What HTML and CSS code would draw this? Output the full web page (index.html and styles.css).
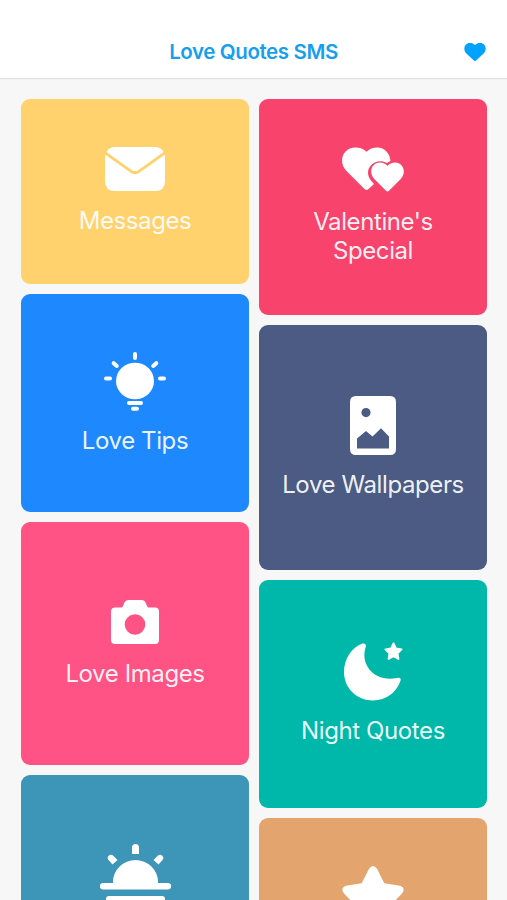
FILE: index.html
```html
<!DOCTYPE html>
<html lang="en">
<head>
    <meta charset="UTF-8">
    <meta name="viewport" content="width=device-width, initial-scale=1.0">
    <title>Love Quotes SMS</title>
    <link rel="stylesheet" href="styles.css">
</head>
<body>
    <header class="header">
        <h1>Love Quotes SMS</h1>
        <svg class="favorite" width="22" height="20" viewBox="0 0 22 20"><path d="M11 19Q10.3 19 9.6 18.3L2.4 11.6C-1.6 7.4.6.9 5.8.9 8 .9 9.8 1.5 11 3 12.2 1.5 14 .9 16.2.9 21.4.9 23.6 7.4 19.6 11.6L12.4 18.3Q11.7 19 11 19Z"/></svg>
    </header>
    <main class="grid">
        <div class="column">
            <a class="card messages">
                <svg width="60" height="44" viewBox="0 0 60 44">
                    <path d="M1.5 5Q4 0 10 0H50Q56 0 58.5 5L33.5 23Q30 25.5 26.5 23Z"/>
                    <path d="M0 7.5L26 26Q30 28.5 34 26L60 7.5V34Q60 44 50 44H10Q0 44 0 34Z"/>
                </svg>
                <span>Messages</span>
            </a>
            <a class="card tips">
                <svg width="62" height="60" viewBox="0 0 62 60">
                    <ellipse cx="31" cy="30" rx="19" ry="18.3"/>
                    <path class="line" d="M31 3V7M9.7 12.2L12.8 15M52.3 12.2L49.2 15M2 27.5H6M56 27.5H60M25 52H37M29 57.8H33"/>
                </svg>
                <span>Love Tips</span>
            </a>
            <a class="card images">
                <svg width="48" height="44" viewBox="0 0 48 44">
                    <path fill-rule="evenodd" d="M4 7.5H10Q11.5 7.5 12 6L13.2 3Q14.5 0 17.5 0H30.5Q33.5 0 34.8 3L36 6Q36.5 7.5 38 7.5H44Q48 7.5 48 11.5V40Q48 44 44 44H4Q0 44 0 40V11.5Q0 7.5 4 7.5ZM24 14.2A10.3 10.3 0 1 0 24 34.8A10.3 10.3 0 1 0 24 14.2Z"/>
                </svg>
                <span>Love Images</span>
            </a>
            <a class="card morning">
                <svg width="71" height="60" viewBox="0 0 71 60">
                    <path d="M13 39V38A22.5 22 0 0 1 58 38V39H68A3.2 3.2 0 0 1 68 45.5H3A3.2 3.2 0 0 1 3 39ZM9 52H62A3 3 0 0 1 62 58H9A3 3 0 0 1 9 52Z"/>
                    <path d="M32 10V3.5A3.5 3.5 0 0 1 39 3.5V10ZM12.5 20.5L8.5 16A3.2 3.2 0 0 1 13 11.5L17.5 16ZM58.5 20.5L62.5 16A3.2 3.2 0 0 0 58 11.5L53.5 16Z"/>
                </svg>
            </a>
        </div>
        <div class="column">
            <a class="card valentine">
                <svg width="62" height="45" viewBox="0 0 62 45">
                    <path d="M24.5 43Q23.5 43 22.5 42L4.5 24C-4.5 14.5 1 .5 13.5.5 18 .5 22 2 24.5 4.8 27 2 31 .5 35.5.5 42.5.5 48 6.5 48.5 14Q46.5 14.8 45 16C32.5 9.5 20.5 22.5 28.7 33.3L32 37 26.5 42Q25.5 43 24.5 43Z"/>
                    <path d="M45.5 44.5Q44.8 44.5 44 43.7L32.3 32C26 25 30 15.5 38 15.5 41 15.5 43.8 16.7 45.5 19 47.2 16.7 50 15.5 53 15.5 61 15.5 65 25 58.7 32L47 43.7Q46.2 44.5 45.5 44.5Z"/>
                </svg>
                <span>Valentine's Special</span>
            </a>
            <a class="card wallpapers">
                <svg width="46" height="59" viewBox="0 0 46 59">
                    <path fill-rule="evenodd" d="M6 0H40Q46 0 46 6V53Q46 59 40 59H6Q0 59 0 53V6Q0 0 6 0ZM16 12A4.6 4.6 0 1 0 16 21.2A4.6 4.6 0 1 0 16 12ZM7 52.5H39V40.5L31 32.2 22.5 40.5 16 35 7 42.5Z"/>
                </svg>
                <span>Love Wallpapers</span>
            </a>
            <a class="card night">
                <svg width="60" height="59" viewBox="0 0 60 59">
                    <path d="M19.5 1.6C21.5.8 23.5 2.4 22.8 4.7C16.5 23 32 40.5 54 36Q58.5 35 57.5 38.8C53.5 50.5 43 58.5 30 58.5C13.5 58.5 1 46 1 30C1 17 8.5 5.7 19.5 1.6Z"/>
                    <path class="round" d="M50.5 1.5L53 6.6 58.5 7.4 54.5 11.3 55.4 16.8 50.5 14.2 45.6 16.8 46.5 11.3 42.5 7.4 48 6.6Z"/>
                </svg>
                <span>Night Quotes</span>
            </a>
            <a class="card best">
                <svg width="62" height="60" viewBox="0 0 62 60">
                    <path d="M27 2.8Q31 -2.8 35 2.8L42.3 17.2 58 19.8Q64 22 60 27.5L49 39 51.3 54Q51 60.5 45 58.5L31 51 17 58.5Q11 60.5 10.7 54L13 39 2 27.5Q-2 22 4 19.8L19.7 17.2Z"/>
                </svg>
            </a>
        </div>
    </main>
</body>
</html>
```

FILE: styles.css
```css
* {
    box-sizing: border-box;
}
body {
    font-family: Inter, "Liberation Sans", sans-serif;
    margin: 0;
    height: 900px;
    overflow: hidden;
    background-color: #f7f7f7;
}
.header {
    display: grid;
    grid-template-columns: 1fr auto 1fr;
    align-items: center;
    height: 79px;
    padding: 26px 21px 0;
    background-color: white;
    border-bottom: 1px solid #e6e6e6;
    box-shadow: 0 1px 1px #f0f0f0;
}
h1 {
    grid-column: 2;
    margin: 0;
    color: #169fee;
    font-size: 20.5px;
    font-weight: 600;
    letter-spacing: -0.4px;
    line-height: 26px;
}
.favorite {
    justify-self: end;
    fill: #00a2ff;
}
.grid {
    display: grid;
    grid-template-columns: 1fr 1fr;
    gap: 10px;
    height: 821px;
    overflow: hidden;
    padding: 19.5px 20px 0 21px;
}
.column {
    display: flex;
    flex-direction: column;
    gap: 10px;
    min-width: 0;
}
.card {
    display: flex;
    flex-direction: column;
    align-items: center;
    justify-content: center;
    flex-shrink: 0;
    gap: 15px;
    padding: 0 20px;
    border-radius: 9px;
    color: rgba(255, 255, 255, 0.93);
    font-size: 24px;
    letter-spacing: -0.4px;
    line-height: 29px;
    text-align: center;
}
.card svg {
    fill: white;
}
.card .line {
    fill: none;
    stroke: white;
    stroke-width: 4;
    stroke-linecap: round;
}
.card .round {
    stroke: white;
    stroke-width: 2;
    stroke-linejoin: round;
}
.messages {
    height: 185px;
    background-color: #ffd26e;
}
.tips {
    height: 218.5px;
    background-color: #1e88ff;
}
.images {
    height: 243px;
    background-color: #ff5285;
}
.morning {
    justify-content: flex-start;
    height: 242px;
    padding-top: 69px;
    background-color: #3d95b8;
}
.valentine {
    height: 216px;
    padding-bottom: 1px;
    background-color: #f8436d;
}
.valentine span {
    max-width: 150px;
}
.wallpapers {
    height: 245px;
    padding: 0;
    background-color: #4c5b83;
}
.night {
    height: 228px;
    background-color: #00b8a9;
}
.best {
    justify-content: flex-start;
    height: 200px;
    padding-top: 48px;
    background-color: #e3a56d;
}
```
